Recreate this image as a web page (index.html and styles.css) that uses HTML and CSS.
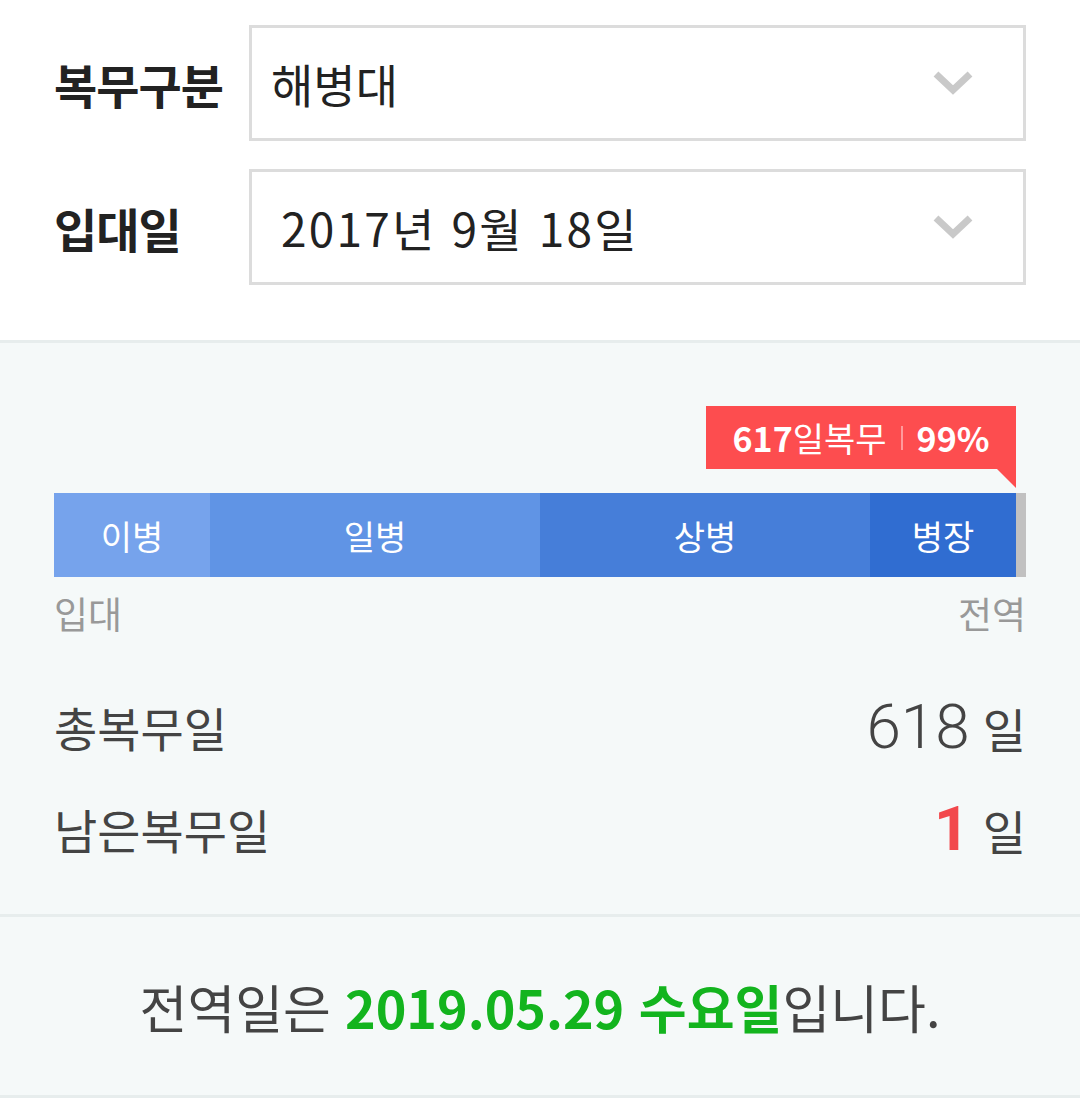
FILE: index.html
```html
<!DOCTYPE html>
<html lang="ko">
<head>
  <meta charset="UTF-8">
  <meta name="viewport" content="width=device-width, initial-scale=1.0">
  <title>전역일 계산기</title>
  <link rel="stylesheet" href="styles.css">
</head>
<body>

  <!-- 입력 -->
  <div class="form">
    <div class="form-row">
      <label class="form-label">복무구분</label>
      <div class="select">
        <span class="select-text">해병대</span>
        <svg class="chevron" width="40" height="26" viewBox="0 0 40 26"><polyline points="3,4 20,20 37,4" fill="none" stroke="#c9c9c9" stroke-width="7"/></svg>
      </div>
    </div>
    <div class="form-row">
      <label class="form-label">입대일</label>
      <div class="select">
        <span class="select-text date">2017년 9월 18일</span>
        <svg class="chevron" width="40" height="26" viewBox="0 0 40 26"><polyline points="3,4 20,20 37,4" fill="none" stroke="#c9c9c9" stroke-width="7"/></svg>
      </div>
    </div>
  </div>

  <!-- 진행 상황 -->
  <div class="status">
    <div class="tip-row">
      <div class="tip">
        <b>617</b>일복무<span class="tip-sep"></span><b>99%</b>
      </div>
    </div>

    <div class="bar">
      <div class="seg seg1" style="width:156px">이병</div>
      <div class="seg seg2" style="width:330px">일병</div>
      <div class="seg seg3" style="width:330px">상병</div>
      <div class="seg seg4" style="width:146px">병장</div>
      <div class="seg rest" style="width:10px"></div>
    </div>
    <div class="bar-labels">
      <span>입대</span>
      <span>전역</span>
    </div>

    <div class="stats">
      <div class="stat-row">
        <span class="stat-name">총복무일</span>
        <span class="stat-value"><span class="num">618</span> 일</span>
      </div>
      <div class="stat-row">
        <span class="stat-name">남은복무일</span>
        <span class="stat-value"><span class="num red">1</span> 일</span>
      </div>
    </div>
  </div>

  <!-- 결과 -->
  <div class="result">
    전역일은 <strong>2019.05.29 수요일</strong>입니다.
  </div>

</body>
</html>
```

FILE: styles.css
```css
body {
  font-family: "Noto Sans CJK KR", "Noto Sans", sans-serif;
  margin: 0;
  padding: 0;
  background-color: #fff;
  color: #222;
}

.form {
  padding: 25px 54px 55px 54px;
}

.form-row {
  display: flex;
  align-items: center;
  margin-bottom: 28px;
}

.form-row:last-child {
  margin-bottom: 0;
}

.form-label {
  width: 195px;
  font-size: 47px;
  font-weight: bold;
  color: #222;
  line-height: 1;
  letter-spacing: -1px;
}

.select {
  flex: 1;
  height: 110px;
  border: 3px solid #dcdcdc;
  display: flex;
  align-items: center;
  justify-content: space-between;
  padding: 0 50px 0 19px;
}

.select-text {
  font-size: 46px;
  color: #222;
  line-height: 1;
}

.select-text.date {
  padding-left: 10px;
  letter-spacing: 2.2px;
}

.status {
  background-color: #f5f9f9;
  border-top: 3px solid #e7eded;
  padding: 63px 54px 35px 54px;
}

.tip-row {
  display: flex;
  justify-content: flex-end;
  padding-right: 10px;
  margin-bottom: 24px;
}

.tip {
  position: relative;
  background-color: #fd4d4f;
  color: #fff;
  height: 63px;
  width: 310px;
  box-sizing: border-box;
  display: flex;
  align-items: center;
  justify-content: center;
  font-size: 34px;
  line-height: 1;
}

.tip b {
  font-weight: bold;
}

.tip::after {
  content: "";
  position: absolute;
  right: 0;
  top: 63px;
  border-top: 19px solid #fd4d4f;
  border-left: 19px solid transparent;
}

.tip-sep {
  display: inline-block;
  width: 2px;
  height: 24px;
  background-color: #ff9a9b;
  margin: 0 14px;
}

.bar {
  display: flex;
  height: 84px;
}

.seg {
  display: flex;
  align-items: center;
  justify-content: center;
  color: #fff;
  font-size: 34px;
}

.seg1 { background-color: #76a3ec; }
.seg2 { background-color: #6094e5; }
.seg3 { background-color: #467ed9; }
.seg4 { background-color: #306dd1; }
.rest { background-color: #c1c1c1; }

.bar-labels {
  display: flex;
  justify-content: space-between;
  font-size: 37px;
  color: #999;
  margin-top: 14px;
  line-height: 44px;
}

.stats {
  margin-top: 40px;
}

.stat-row {
  display: flex;
  justify-content: space-between;
  align-items: center;
  height: 102px;
}

.stat-name {
  font-size: 47px;
  color: #444;
}

.stat-value {
  font-size: 47px;
  color: #444;
}

.num {
  font-family: Roboto, "Noto Sans", sans-serif;
  font-size: 62px;
  font-weight: 300;
  color: #444;
}

.num.red {
  color: #f2484c;
  font-weight: bold;
}

.result {
  background-color: #f5f9f9;
  border-top: 3px solid #e7eded;
  border-bottom: 3px solid #e7eded;
  height: 178px;
  display: flex;
  align-items: center;
  justify-content: center;
  font-size: 52px;
  color: #444;
}

.result strong {
  color: #13b41e;
  font-weight: bold;
  margin-left: 14px;
}
```
